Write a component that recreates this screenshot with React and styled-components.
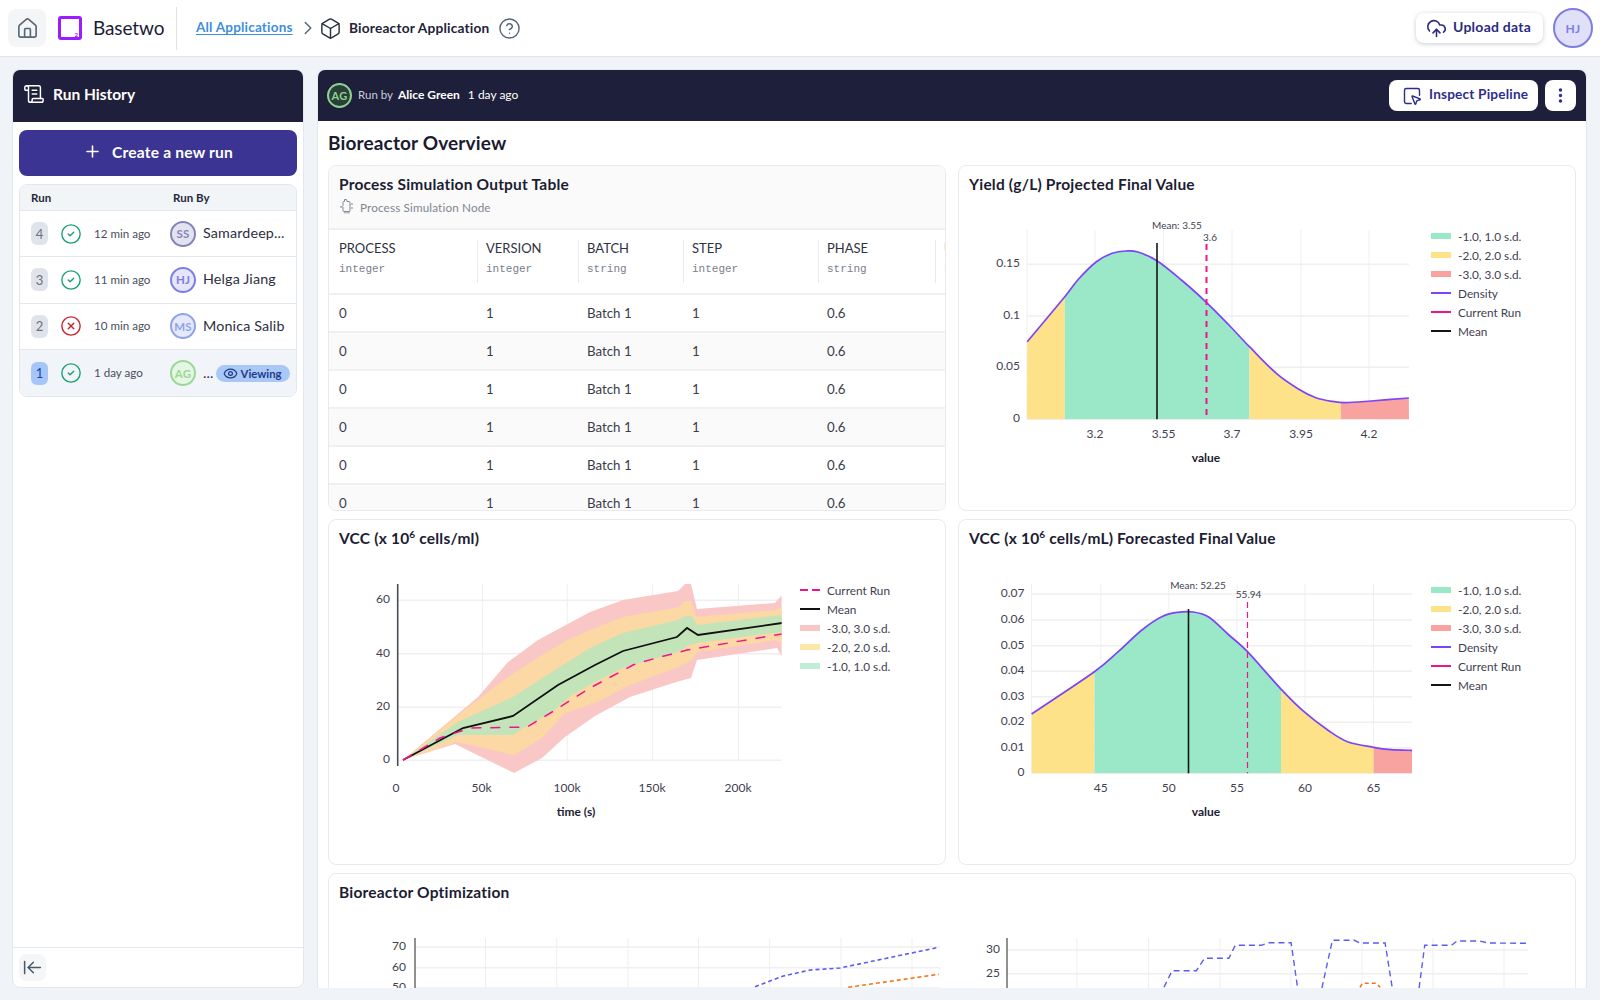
import React from "react";
import styled, { createGlobalStyle } from "styled-components";
import { House, Box, CircleHelp, CloudUpload, ScrollText, Plus, CircleCheck, CircleX, Eye, ArrowLeftToLine, EllipsisVertical, SquareMousePointer, ChevronRight } from "lucide-react";

const FONT = `"Lato", "Noto Sans", sans-serif`;

const Global = createGlobalStyle`
  html, body { margin: 0; padding: 0; height: 100%; background: #f0f3f8; }
  body { font-family: ${FONT}; color: #1b1c33; overflow: hidden; }
  * { box-sizing: border-box; }
`;

const Page = styled.div`width: 1600px; height: 1000px; display: flex; flex-direction: column; overflow: hidden;`;
const TopBar = styled.header`height: 57px; flex: none; background: #fff; border-bottom: 1px solid #e2e7ee; display: flex; align-items: center; padding: 0 7px 0 8px;`;
const HomeButton = styled.div`width: 38px; height: 38px; background: #f4f5f7; border-radius: 8px; display: flex; align-items: center; justify-content: center; color: #566778;`;
const LogoMark = styled.div`width: 24px; height: 24px; margin-left: 12px; border: 3px solid #9b1cff; border-radius: 3px; position: relative; color: #9b1cff;
  span { position: absolute; right: 1px; bottom: -1px; font-size: 6px; line-height: 7px; font-weight: 700; }`;
const LogoName = styled.div`margin-left: 11px; font-size: 19px; letter-spacing: -0.1px; color: #1c1d36; width: 72px; white-space: nowrap; padding-bottom: 1px;`;
const TopDivider = styled.div`width: 1px; height: 43px; background: #dde3ea; margin: 0 19px 0 11px;`;
const Crumb = styled.a`font-size: 13.5px; font-weight: 700; letter-spacing: 0.2px; color: #3d8fdb; text-decoration: underline; text-underline-offset: 2px; width: 97px; white-space: nowrap; padding-bottom: 2px;`;
const CrumbArrow = styled.div`margin: 0 0 0 4px; display: flex; color: #566778;`;
const CrumbBox = styled.div`display: flex; color: #27313d; margin-right: 7px;`;
const CrumbTitle = styled.div`font-size: 13.7px; font-weight: 700; letter-spacing: 0.2px; color: #22233a; white-space: nowrap; width: 140px; padding-bottom: 2px;`;
const HelpIcon = styled.div`display: flex; margin-left: 9px; color: #566778;`;
const TopRight = styled.div`margin-left: auto; display: flex; align-items: center; gap: 10px;`;
const UploadButton = styled.button`height: 30px; width: 127px; border: 0; background: #fff; border-radius: 8px; box-shadow: 0 1px 4px rgba(60,70,100,.28); display: flex; align-items: center; gap: 6px; padding: 0 0 0 10px; color: #2a2a84; font: 700 14px ${FONT}; letter-spacing: .25px; white-space: nowrap;
  span { position: relative; top: -1.5px; }`;
const Avatar = styled.div`
  flex: none; width: ${p => p.$size}px; height: ${p => p.$size}px; border-radius: 50%;
  border: 2px solid ${p => p.$line}; background: ${p => p.$fill}; color: ${p => p.$line};
  display: flex; align-items: center; justify-content: center; font-size: ${p => p.$font}px; font-weight: 700; letter-spacing: .2px;
`;

const Content = styled.div`flex: 1; min-height: 0; display: flex; gap: 13px; padding: 12px 13px 12px 12px;`;
const Sidebar = styled.aside`width: 292px; flex: none; background: #fff; border: 1px solid #e3e8ee; border-radius: 8px; display: flex; flex-direction: column; overflow: hidden;`;
const SideHead = styled.div`height: 52px; flex: none; background: #1e1f3a; color: #fff; display: flex; align-items: center; gap: 8px; padding: 0 0 4px 10px; font-size: 15.5px; font-weight: 700; letter-spacing: 0;`;
const SideBody = styled.div`flex: 1; padding: 8px 6px;`;
const CreateButton = styled.button`width: 278px; height: 46px; border: 0; border-radius: 8px; background: #3c3492; color: #fff; display: flex; align-items: center; justify-content: center; gap: 10px; padding: 0 0 3px; font: 700 15.6px ${FONT}; letter-spacing: .2px;`;
const RunTable = styled.div`margin-top: 8px; width: 278px; border: 1px solid #e2e7ec; border-radius: 8px; overflow: hidden;`;
const RunHead = styled.div`height: 26px; background: #f1f5f7; display: grid; grid-template-columns: 142px 1fr; align-items: center; padding-left: 11px; font-size: 11.5px; font-weight: 700; color: #26273b; border-bottom: 1px solid #e4e8ed;`;
const RunRow = styled.div`height: 46.3px; display: grid; grid-template-columns: 17px 46px 76px 1fr; align-items: center; padding-left: 11px; background: ${p => p.$active ? "#f1f5f9" : "#fff"}; border-bottom: ${p => p.$last ? 0 : 1}px solid #e4e8ed;`;
const RunBadge = styled.div`width: 17px; height: 23px; border-radius: 6px; display: flex; align-items: center; justify-content: center; font-size: 13px; background: ${p => p.$active ? "#a6c6fa" : "#e0e4ea"}; color: ${p => p.$active ? "#1d3fa8" : "#66737f"};`;
const StatusCell = styled.div`display: flex; padding-left: 12px; color: ${p => p.$bad ? "#c9202c" : "#17a06e"};`;
const TimeCell = styled.div`font-size: 11.6px; color: #4a4d5c; white-space: nowrap; padding-bottom: 1px;`;
const WhoCell = styled.div`display: flex; align-items: center; min-width: 0; gap: 7px;`;
const WhoName = styled.div`font-size: 14.3px; color: #2d2e40; white-space: nowrap; letter-spacing: .15px; padding-bottom: 2px;`;
const ViewingPill = styled.div`display: flex; align-items: center; gap: 3px; height: 17px; width: 74px; margin-left: -5px; padding-left: 7px; border-radius: 9px; background: #a9c8f8; color: #1f3b88; font-size: 11.3px; font-weight: 700; white-space: nowrap; flex: none;`;
const SideFoot = styled.div`height: 40px; flex: none; border-top: 1px solid #e3e8ee; padding: 6px;`;
const CollapseButton = styled.div`width: 27px; height: 27px; border-radius: 7px; background: #f5f6f7; display: flex; align-items: center; justify-content: center; color: #475869;`;

const Main = styled.main`flex: 1; min-width: 0; background: #fff; border: 1px solid #e3e8ee; border-radius: 8px 8px 0 0; border-bottom: 0; overflow: hidden; display: flex; flex-direction: column;`;
const MainHead = styled.div`height: 51px; flex: none; background: #1e1f3a; display: flex; align-items: center; padding: 0 10px 0 9px; color: #c9cdd9; font-size: 11.5px;`;
const RunBy = styled.span`margin-left: 6px; padding-bottom: 3px;`;
const RunName = styled.span`margin-left: 5px; color: #fff; font-weight: 700; font-size: 12px; padding-bottom: 3px;`;
const RunAgo = styled.span`margin-left: 8px; color: #fff; font-size: 12px; padding-bottom: 3px;`;
const HeadActions = styled.div`margin-left: auto; display: flex; gap: 7px;`;
const InspectButton = styled.button`height: 31px; width: 149px; border: 0; border-radius: 8px; background: #fff; color: #2d2d8f; display: flex; align-items: center; gap: 7px; padding-left: 13px; font: 700 13.6px ${FONT}; letter-spacing: .2px; white-space: nowrap;
  span { position: relative; top: -1.5px; }`;
const DotsButton = styled.button`height: 31px; width: 31px; border: 0; border-radius: 8px; background: #fff; color: #2d2d8f; display: flex; align-items: center; justify-content: center; padding: 0;`;
const MainBody = styled.div`flex: 1; min-height: 0; padding: 10px 10px 0 10px; overflow: hidden;`;
const PageTitle = styled.h1`margin: 0 0 10px; font-size: 19px; line-height: 24px; font-weight: 700; letter-spacing: .15px; color: #1a1b30;`;
const CardGrid = styled.div`display: grid; grid-template-columns: 618px 618px; grid-auto-rows: 346px; gap: 8px 12px;`;
const Card = styled.section`background: #fff; border: 1px solid #e7eaee; border-radius: 8px; overflow: hidden; display: flex; flex-direction: column; grid-column: ${p => p.$wide ? "1 / 3" : "auto"};`;
const CardTitle = styled.h2`margin: 0; padding: 8px 10px 0; height: 49px; flex: none; font-size: 15.5px; line-height: 20px; font-weight: 700; letter-spacing: .2px; color: #1c1d32;
  sup { font-size: 10px; line-height: 0; }`;
const ChartBody = styled.div`display: flex; flex: 1; min-height: 0;`;
const Legend = styled.ul`list-style: none; margin: 11.5px 0 0 ${p => p.$gap}px; padding: 0;`;
const LegendRow = styled.li`height: 19px; display: flex; align-items: center; gap: 7px; font-size: 11.8px; color: #3f4150; white-space: nowrap;`;
const Swatch = styled.i`display: block; width: 20px; height: ${p => p.$h}px; background: ${p => p.$dash ? `repeating-linear-gradient(90deg, ${p.$c} 0 8px, transparent 8px 12px)` : p.$c};`;

const TableHeadArea = styled.div`height: 64px; flex: none; background: #fafafa; padding: 8px 10px 0; border-bottom: 2px solid #eef1f4;`;
const TableTitle = styled.div`font-size: 15.5px; line-height: 20px; font-weight: 700; letter-spacing: .2px; color: #1c1d32;`;
const TableSub = styled.div`margin-top: 4px; display: flex; align-items: center; gap: 5px; font-size: 11.7px; color: #7f8790; letter-spacing: .15px;`;
const ScrollArea = styled.div`flex: 1; min-height: 0; overflow: hidden;`;
const Columns = styled.div`display: grid; grid-template-columns: 149px 101px 105px 135px 117px 120px; width: 640px;`;
const HeadRow = styled(Columns)`height: 65px; border-bottom: 2px solid #eef1f4; padding-top: 10px;`;
const HeadCell = styled.div`height: 43px; padding-left: ${p => p.$first ? 10 : 8}px; border-right: 1px solid #e6e9ed;
  b { display: block; font-weight: 400; font-size: 13px; line-height: 16px; color: #30323f; }
  code { display: block; margin-top: 5px; font: 11px/16px "Liberation Mono", monospace; color: #7a8088; }`;
const BodyRow = styled(Columns)`height: 38px; border-bottom: 2px solid #eef1f4; align-items: center; background: ${p => p.$alt ? "#fafafa" : "#fff"};`;
const BodyCell = styled.div`padding-left: ${p => p.$first ? 10 : 8}px; font-size: 13.3px; color: #3a3c4a;`;

const T = styled.text`font-family: ${FONT}; font-size: ${p => p.$s || 12}px; font-weight: ${p => p.$w || 400}; fill: ${p => p.$c || "#3f4150"}; transform: translateY(1px);`;

const pts = l => l.map(p => p.join(",")).join(" ");
const line = l => "M" + l.map(p => p.map(v => +v.toFixed(1)).join(" ")).join("L");
const smooth = l => {
  let d = `M${l[0][0].toFixed(1)} ${l[0][1].toFixed(1)}`;
  for (let i = 0; i < l.length - 1; i++) {
    const a = l[Math.max(i - 1, 0)], b = l[i], c = l[i + 1], e = l[Math.min(i + 2, l.length - 1)];
    d += `C${(b[0] + (c[0] - a[0]) / 6).toFixed(1)} ${(b[1] + (c[1] - a[1]) / 6).toFixed(1)} ${(c[0] - (e[0] - b[0]) / 6).toFixed(1)} ${(c[1] - (e[1] - b[1]) / 6).toFixed(1)} ${c[0].toFixed(1)} ${c[1].toFixed(1)}`;
  }
  return d;
};
const map = (ox, oy, sx) => l => l.map(([x, y]) => [ox + x / sx, oy + y / 3]);

function Density({ id, box, curve, left, right, top, base, splits, yTicks, xTicks, yLabelX, mean, cur, curStyle, meanLabel, curLabel, axisY }) {
  const d = smooth(curve);
  const area = `${d}L${right} ${base}L${left} ${base}Z`;
  const [a, b, c] = splits;
  return (
    <svg width={box[2]} height={box[3]} viewBox={box.join(" ")} style={{ flex: "none", display: "block" }}>
      <clipPath id={id}><path d={area} /></clipPath>
      {yTicks.map(([y]) => <line key={y} x1={left} x2={right} y1={y} y2={y} stroke="#efefef" strokeWidth="1.5" />)}
      {xTicks.map(([x]) => <line key={x} x1={x} x2={x} y1={top} y2={base} stroke="#efefef" />)}
      <line x1={left} x2={left} y1={top} y2={base} stroke="#efefef" />
      <g clipPath={`url(#${id})`}>
        <rect x={left} y={top} width={a - left} height={base - top} fill="#fde28a" />
        <rect x={a} y={top} width={b - a} height={base - top} fill="#9ae8c8" />
        <rect x={b} y={top} width={c - b} height={base - top} fill="#fde28a" />
        <rect x={c} y={top} width={right - c} height={base - top} fill="#f8a3a0" />
      </g>
      <path d={d} fill="none" stroke="#7c44f6" strokeWidth="1.7" />
      <line x1={mean[0]} x2={mean[0]} y1={mean[1]} y2={base} stroke="#151515" strokeWidth="1.6" />
      <line x1={cur[0]} x2={cur[0]} y1={cur[1]} y2={base} stroke="#f0148c" {...curStyle} />
      <T x={meanLabel[0]} y={meanLabel[1]} $s={10} textAnchor="middle" dominantBaseline="middle">{meanLabel[2]}</T>
      <T x={curLabel[0]} y={curLabel[1]} $s={10} textAnchor="middle" dominantBaseline="middle">{curLabel[2]}</T>
      {yTicks.map(([y, t]) => <T key={t} x={yLabelX} y={y - 1} $s={12} textAnchor="end" dominantBaseline="middle">{t}</T>)}
      {xTicks.map(([x, t]) => <T key={t} x={x} y={axisY} $s={12} textAnchor="middle" dominantBaseline="middle">{t}</T>)}
      <T x="1206" y={axisY + 23.5} $s={12} $w={700} $c="#1c1d32" textAnchor="middle" dominantBaseline="middle">value</T>
    </svg>
  );
}

const m1 = map(960, 170, 2.529);
const m3 = map(960, 520, 2.529);
const m4 = map(330, 870, 1.235);

const yieldCurve = m1([[170, 515], [265, 380], [300, 327], [345, 275], [385, 250], [420, 243], [450, 246], [498, 272], [560, 330], [623, 397], [680, 465], [732, 530], [800, 610], [860, 660], [900, 683], [940, 694], [975, 698], [1040, 693], [1135, 684]]);
const vccCurve = m3([[181, 582], [340, 455], [400, 395], [460, 330], [510, 290], [550, 277], [590, 276], [630, 292], [680, 345], [727, 395], [810, 505], [870, 575], [930, 630], [980, 665], [1046, 682], [1090, 689], [1143, 691]]);

const redBand = [[403, 760], [478, 697], [508, 662], [538, 640], [590, 612], [623, 600], [678, 591], [685, 584], [691, 584], [697, 609], [775, 603], [782, 595], [782, 657], [777, 648], [697, 660], [691, 678], [673, 683], [630, 697], [595, 716], [565, 737], [542, 758], [514, 773], [455, 744]];
const orangeBand = [[403, 760], [462, 712], [508, 677], [542, 655], [568, 640], [590, 630], [623, 617], [680, 607], [684, 601], [691, 601], [696, 617], [775, 610], [782, 607], [782, 643], [775, 640], [697, 652], [692, 660], [678, 667], [630, 685], [595, 703], [565, 713], [542, 738], [514, 755], [457, 742]];
const greenBand = [[403, 760], [458, 722], [513, 697], [558, 668], [590, 648], [623, 633], [678, 620], [685, 616], [692, 616], [697, 625], [782, 615], [782, 632], [697, 643], [690, 645], [678, 652], [623, 668], [595, 682], [572, 695], [552, 712], [525, 727], [513, 735], [458, 735]];
const meanLine = [[403, 760], [463, 728], [513, 716], [558, 685], [595, 665], [623, 651], [677, 637], [687, 628], [698, 635], [782, 623]];
const curLine = [[403, 760], [440, 738], [470, 728], [527, 727], [552, 712], [590, 688], [633, 665], [638, 663], [687, 650], [782, 634]];

const optBlueA = m4([[525, 350], [560, 318], [593, 300], [630, 294], [752, 232]]);
const optOrangeA = m4([[640, 352], [752, 313]]);
const optBlueB = [
  [[1030, 352], [1040, 302], [1070, 302], [1080, 265], [1110, 265], [1118, 226], [1150, 226], [1160, 218], [1187, 218], [1195, 354]],
  [[1225, 354], [1238, 211], [1265, 211], [1272, 219], [1303, 219], [1312, 354]],
  [[1345, 354], [1352, 226], [1385, 226], [1392, 213], [1420, 213], [1430, 219], [1480, 220]],
].map(m4);
const optOrangeB = m4([[1272, 352], [1275, 340], [1292, 340], [1297, 352]]);

const densityLegend = [["-1.0, 1.0 s.d.", "#9ae8c8", 6], ["-2.0, 2.0 s.d.", "#fde28a", 6], ["-3.0, 3.0 s.d.", "#f8a3a0", 6], ["Density", "#7c44f6", 2], ["Current Run", "#f0148c", 2], ["Mean", "#151515", 2]];
const runs = [
  { n: 4, ago: "12 min ago", who: "SS", name: "Samardeep...", line: "#8683b8", fill: "#e3e2f0" },
  { n: 3, ago: "11 min ago", who: "HJ", name: "Helga Jiang", line: "#7e7ee0", fill: "#e6e6fb" },
  { n: 2, ago: "10 min ago", who: "MS", name: "Monica Salib", line: "#8fa3e8", fill: "#e4e9fb", bad: true },
  { n: 1, ago: "1 day ago", who: "AG", name: "...", line: "#9ad89a", fill: "#e5f6e2", active: true },
];
const columns = [["PROCESS", "integer", "0"], ["VERSION", "integer", "1"], ["BATCH", "string", "Batch 1"], ["STEP", "integer", "1"], ["PHASE", "string", "0.6"], ["UNIT", "string", ""]];

const NodeIcon = () => (
  <svg width="16" height="17" viewBox="0 0 16 17" fill="none" stroke="#7f8790" strokeWidth="1">
    <path d="M1 9h2.5M5.5 1.5h2l.5 2h2a1 1 0 0 1 1 1v8a1 1 0 0 1-1 1H5a1 1 0 0 1-1-1v-3l-1-1 1-1V4.500a1 1 0 0 1 1.500-1z" />
    <path d="M12 6h2M12 10h2M6 13.5v2M8 13.5v2M10 13.5v2" />
  </svg>
);

export default function App() {
  return (
    <Page>
      <Global />
      <TopBar>
        <HomeButton><House size={23} strokeWidth={1.7} /></HomeButton>
        <LogoMark><span>2</span></LogoMark>
        <LogoName>Basetwo</LogoName>
        <TopDivider />
        <Crumb>All Applications</Crumb>
        <CrumbArrow><ChevronRight size={22} strokeWidth={1.6} /></CrumbArrow>
        <CrumbBox><Box size={23} strokeWidth={1.5} /></CrumbBox>
        <CrumbTitle>Bioreactor Application</CrumbTitle>
        <HelpIcon><CircleHelp size={23} strokeWidth={1.5} /></HelpIcon>
        <TopRight>
          <UploadButton><CloudUpload size={21} strokeWidth={1.8} /><span>Upload data</span></UploadButton>
          <Avatar $size={40} $font={12} $line="#7e7ee0" $fill="#e0e0f9">HJ</Avatar>
        </TopRight>
      </TopBar>
      <Content>
        <Sidebar>
          <SideHead><ScrollText size={22} strokeWidth={1.6} />Run History</SideHead>
          <SideBody>
            <CreateButton><Plus size={19} strokeWidth={2} />Create a new run</CreateButton>
            <RunTable>
              <RunHead><span>Run</span><span>Run By</span></RunHead>
              {runs.map((r, i) => (
                <RunRow key={r.n} $active={r.active} $last={i === 3}>
                  <RunBadge $active={r.active}>{r.n}</RunBadge>
                  <StatusCell $bad={r.bad}>{r.bad ? <CircleX size={22} strokeWidth={1.5} /> : <CircleCheck size={22} strokeWidth={1.5} />}</StatusCell>
                  <TimeCell>{r.ago}</TimeCell>
                  <WhoCell>
                    <Avatar $size={26} $font={11.5} $line={r.line} $fill={r.fill}>{r.who}</Avatar>
                    <WhoName>{r.name}</WhoName>
                    {r.active && <ViewingPill><Eye size={15} strokeWidth={2} />Viewing</ViewingPill>}
                  </WhoCell>
                </RunRow>
              ))}
            </RunTable>
          </SideBody>
          <SideFoot><CollapseButton><ArrowLeftToLine size={21} strokeWidth={1.7} /></CollapseButton></SideFoot>
        </Sidebar>
        <Main>
          <MainHead>
            <Avatar $size={25} $font={11} $line="#8fd18f" $fill="#2a3f3a">AG</Avatar>
            <RunBy>Run by</RunBy>
            <RunName>Alice Green</RunName>
            <RunAgo>1 day ago</RunAgo>
            <HeadActions>
              <InspectButton><SquareMousePointer size={20} strokeWidth={1.7} /><span>Inspect Pipeline</span></InspectButton>
              <DotsButton><EllipsisVertical size={19} strokeWidth={2.4} /></DotsButton>
            </HeadActions>
          </MainHead>
          <MainBody>
            <PageTitle>Bioreactor Overview</PageTitle>
            <CardGrid>
              <Card>
                <TableHeadArea>
                  <TableTitle>Process Simulation Output Table</TableTitle>
                  <TableSub><NodeIcon />Process Simulation Node</TableSub>
                </TableHeadArea>
                <ScrollArea>
                  <HeadRow>
                    {columns.map(([h, t], i) => <HeadCell key={h} $first={i === 0}><b>{h}</b><code>{t}</code></HeadCell>)}
                  </HeadRow>
                  {[0, 1, 2, 3, 4, 5].map(r => (
                    <BodyRow key={r} $alt={r % 2 === 1}>
                      {columns.map(([h, , v], i) => <BodyCell key={h} $first={i === 0}>{v}</BodyCell>)}
                    </BodyRow>
                  ))}
                </ScrollArea>
              </Card>
              <Card>
                <CardTitle>Yield (g/L) Projected Final Value</CardTitle>
                <ChartBody>
                  <Density id="yc" box={[959, 215, 466, 280]} curve={yieldCurve} left={1027} right={1409} top={230} base={419.3}
                    splits={[1064.8, 1249.5, 1340.8]}
                    yTicks={[[264.3, "0.15"], [316, "0.1"], [367.3, "0.05"], [419.3, "0"]]}
                    xTicks={[[1095, "3.2"], [1163.6, "3.55"], [1232, "3.7"], [1301, "3.95"], [1369, "4.2"]]}
                    yLabelX={1020} mean={[1157, 243]} cur={[1206.5, 244]} curStyle={{ strokeWidth: 2, strokeDasharray: "6 5" }}
                    meanLabel={[1177, 225, "Mean: 3.55"]} curLabel={[1210, 237.5, "3.6"]} axisY={434} />
                  <Legend $gap={6}>
                    {densityLegend.map(([l, c, h]) => <LegendRow key={l}><Swatch $c={c} $h={h} />{l}</LegendRow>)}
                  </Legend>
                </ChartBody>
              </Card>
              <Card>
                <CardTitle>VCC (x 10<sup>6</sup> cells/ml)</CardTitle>
                <ChartBody>
                  <svg width="466" height="280" viewBox="329 569 466 280" style={{ flex: "none", display: "block" }}>
                    {[600.3, 653.7, 707.3, 760.3].map(y => <line key={y} x1="398" x2="781.6" y1={y} y2={y} stroke="#efefef" strokeWidth="1.5" />)}
                    {[482.3, 567.3, 652.6, 738.3].map(x => <line key={x} x1={x} x2={x} y1="584" y2="760" stroke="#efefef" />)}
                    <clipPath id="vc"><rect x="396" y="584" width="385.6" height="190" /></clipPath>
                    <g clipPath="url(#vc)">
                      <polygon points={pts(redBand)} fill="#f9c8c6" />
                      <polygon points={pts(orangeBand)} fill="#fcd8a4" />
                      <polygon points={pts(greenBand)} fill="#c3e3b9" />
                      <path d={line(meanLine)} fill="none" stroke="#111" strokeWidth="1.8" />
                      <path d={line(curLine)} fill="none" stroke="#f0148c" strokeWidth="1.5" strokeDasharray="10 9" />
                    </g>
                    <line x1="397.7" x2="397.7" y1="584" y2="766" stroke="#4a4c55" strokeWidth="1.6" />
                    {[[599, "60"], [652.5, "40"], [706, "20"], [759, "0"]].map(([y, t]) => <T key={t} x="390" y={y} $s={12} textAnchor="end" dominantBaseline="middle">{t}</T>)}
                    {[[396, "0"], [481.5, "50k"], [567, "100k"], [652, "150k"], [738, "200k"]].map(([x, t]) => <T key={t} x={x} y="788" $s={12} textAnchor="middle" dominantBaseline="middle">{t}</T>)}
                    <T x="576" y="811.7" $s={12} $w={700} $c="#1c1d32" textAnchor="middle" dominantBaseline="middle">time (s)</T>
                  </svg>
                  <Legend $gap={5}>
                    <LegendRow><Swatch $c="#f0148c" $h={1.5} $dash />Current Run</LegendRow>
                    <LegendRow><Swatch $c="#111" $h={2} />Mean</LegendRow>
                    <LegendRow><Swatch $c="#f9c8c6" $h={6} />-3.0, 3.0 s.d.</LegendRow>
                    <LegendRow><Swatch $c="#fde6a8" $h={6} />-2.0, 2.0 s.d.</LegendRow>
                    <LegendRow><Swatch $c="#bfeed8" $h={6} />-1.0, 1.0 s.d.</LegendRow>
                  </Legend>
                </ChartBody>
              </Card>
              <Card>
                <CardTitle>VCC (x 10<sup>6</sup> cells/mL) Forecasted Final Value</CardTitle>
                <ChartBody>
                  <Density id="vf" box={[959, 569, 466, 280]} curve={vccCurve} left={1031.6} right={1412} top={584} base={773.3}
                    splits={[1094.4, 1281, 1373.6]}
                    yTicks={[[594, "0.07"], [620, "0.06"], [645.7, "0.05"], [671.3, "0.04"], [696.7, "0.03"], [722.3, "0.02"], [748, "0.01"], [773.3, "0"]]}
                    xTicks={[[1100.8, "45"], [1168.8, "50"], [1237, "55"], [1305, "60"], [1373.6, "65"]]}
                    yLabelX={1024.5} mean={[1188.5, 609]} cur={[1247.5, 602]} curStyle={{ strokeWidth: 1.2, strokeDasharray: "6 4" }}
                    meanLabel={[1198, 585, "Mean: 52.25"]} curLabel={[1248.6, 594.7, "55.94"]} axisY={788} />
                  <Legend $gap={6}>
                    {densityLegend.map(([l, c, h]) => <LegendRow key={l}><Swatch $c={c} $h={h} />{l}</LegendRow>)}
                  </Legend>
                </ChartBody>
              </Card>
              <Card $wide>
                <CardTitle>Bioreactor Optimization</CardTitle>
                <ChartBody>
                  <svg width="631" height="70" viewBox="329 923 631 70" style={{ flex: "none", display: "block" }}>
                    {[947, 967.7, 988].map(y => <line key={y} x1="415" x2="940.5" y1={y} y2={y} stroke="#efefef" strokeWidth="1.5" />)}
                    {[485.5, 556.7, 628, 698.4, 769.7, 841, 912].map(x => <line key={x} x1={x} x2={x} y1="938" y2="993" stroke="#efefef" />)}
                    <line x1="415" x2="415" y1="938" y2="993" stroke="#222" />
                    {[[946, "70"], [967, "60"], [987, "50"]].map(([y, t]) => <T key={t} x="406" y={y} $s={12} textAnchor="end" dominantBaseline="middle">{t}</T>)}
                    <path d={line(optBlueA)} fill="none" stroke="#5a5cf2" strokeWidth="1.6" strokeDasharray="4 3" />
                    <path d={line(optOrangeA)} fill="none" stroke="#f9731c" strokeWidth="1.6" strokeDasharray="4 3" />
                  </svg>
                  <svg width="580" height="70" viewBox="960 923 580 70" style={{ flex: "none", display: "block" }}>
                    {[950, 973.7].map(y => <line key={y} x1="1007" x2="1528" y1={y} y2={y} stroke="#efefef" strokeWidth="1.5" />)}
                    {[1077, 1148.6, 1220, 1291, 1362, 1433, 1504].map(x => <line key={x} x1={x} x2={x} y1="938" y2="993" stroke="#efefef" />)}
                    <line x1="1007" x2="1007" y1="938" y2="993" stroke="#222" />
                    {[[949, "30"], [972.5, "25"]].map(([y, t]) => <T key={t} x="1000" y={y} $s={12} textAnchor="end" dominantBaseline="middle">{t}</T>)}
                    {optBlueB.map((l, i) => <path key={i} d={line(l)} fill="none" stroke="#5a5cf2" strokeWidth="1.4" strokeDasharray="6 4" />)}
                    <path d={line(optOrangeB)} fill="none" stroke="#f9731c" strokeWidth="1.6" strokeDasharray="4 3" />
                  </svg>
                </ChartBody>
              </Card>
            </CardGrid>
          </MainBody>
        </Main>
      </Content>
    </Page>
  );
}
